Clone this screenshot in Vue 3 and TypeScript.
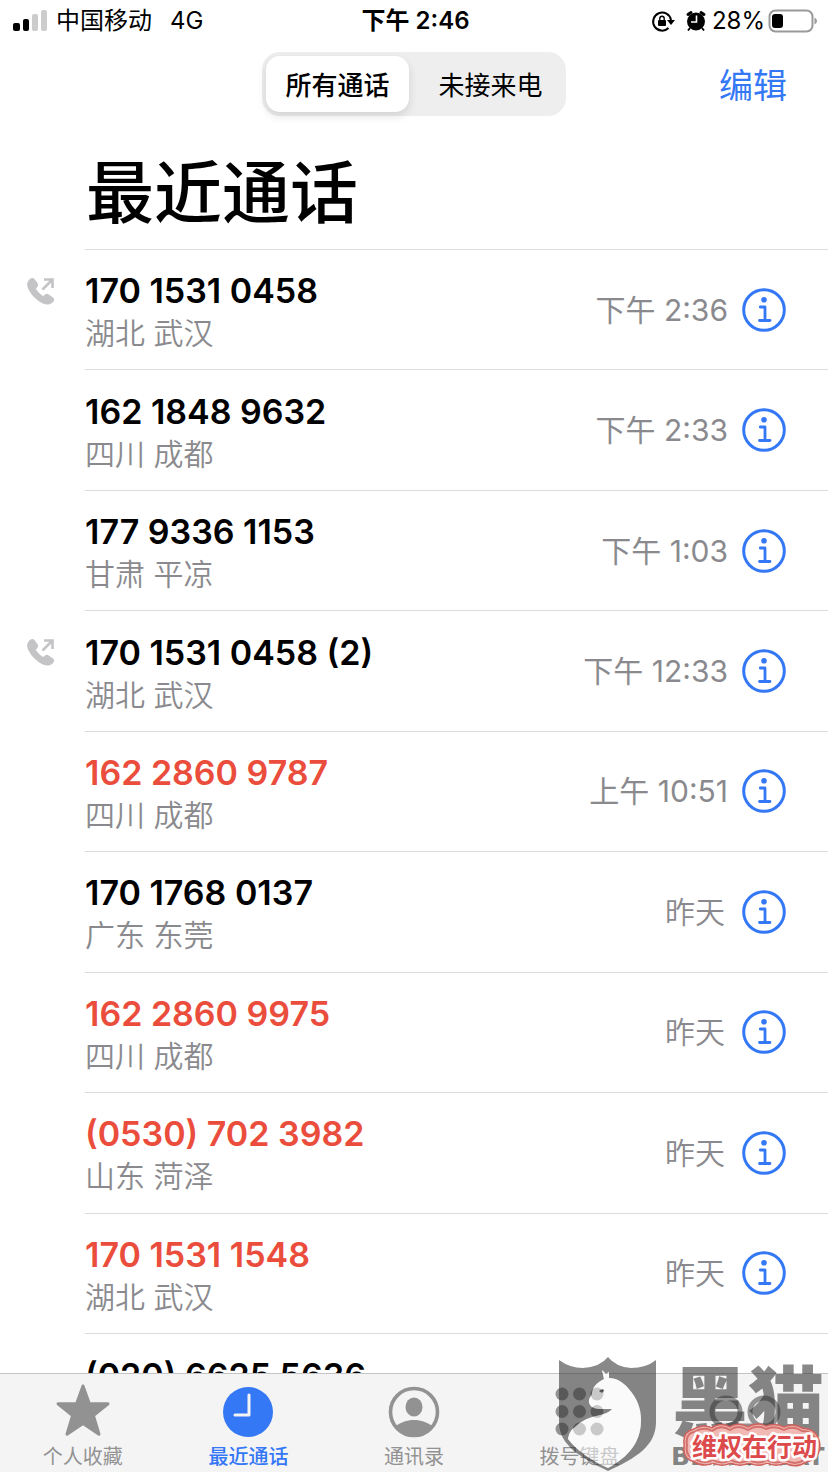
<script setup lang="ts">
import { ref } from 'vue'

interface Call {
  number: string
  place: string
  time: string
  missed?: boolean
  outgoing?: boolean
}

const calls: Call[] = [
  { number: '170 1531 0458', place: '湖北 武汉', time: '下午 2:36', outgoing: true },
  { number: '162 1848 9632', place: '四川 成都', time: '下午 2:33' },
  { number: '177 9336 1153', place: '甘肃 平凉', time: '下午 1:03' },
  { number: '170 1531 0458 (2)', place: '湖北 武汉', time: '下午 12:33', outgoing: true },
  { number: '162 2860 9787', place: '四川 成都', time: '上午 10:51', missed: true },
  { number: '170 1768 0137', place: '广东 东莞', time: '昨天' },
  { number: '162 2860 9975', place: '四川 成都', time: '昨天', missed: true },
  { number: '(0530) 702 3982', place: '山东 菏泽', time: '昨天', missed: true },
  { number: '170 1531 1548', place: '湖北 武汉', time: '昨天', missed: true },
]
const nextNumber = '(020) 6625 5636'

const filters = ['所有通话', '未接来电']
const activeFilter = ref(0)

const tabs = [
  { id: 'star', label: '个人收藏' },
  { id: 'clock', label: '最近通话' },
  { id: 'person', label: '通讯录' },
  { id: 'keypad', label: '拨号键盘' },
  { id: 'voicemail', label: '语音留言' },
]
const activeTab = ref('clock')
const keypadDots = [0, 1, 2, 3, 4, 5, 6, 7, 8]

const cat =
  'M44 16l4 4 3-2v6C58 24 65 28 70 34 79 44 83 54 83 66 83 89 70 103 50 114 33 106 18 96 10 85 11 79 13 76 17 73 23 67 30 64 38 62 47 60 52 58 54 55H41C35 55 30 51 31 46 32 42 34 42 34 39 35 32 40 28 46 25z'
const shield =
  'M1 6Q12 14 25 14 42 13 50 3 58 13 73 14 88 14 98 6V68C98 92 78 104 50 117 24 104 1 92 1 68z'
const cloud =
  'M136 78q10-6 18-1 9-7 18-1 8-6 18 0 9-6 18-1 9-4 18 1 9-5 18 1 13 0 15 13 1 13-13 16-9 6-19 0-9 5-18 0-9 5-18 0-9 5-18 0-9 5-18 0-9 5-18-1-10-2-8-14-2-11 7-13z'
</script>

<template>
  <div class="screen">
    <div class="status">
      <div class="status-side">
        <svg class="signal" viewBox="0 0 36 24" aria-hidden="true">
          <rect x="0" y="14" width="7" height="8" rx="2" />
          <rect x="10" y="10" width="6" height="12" rx="2" />
          <rect x="19" y="5" width="6" height="17" rx="2" fill="#ccc" />
          <rect x="28" y="1" width="6" height="21" rx="2" fill="#ccc" />
        </svg>
        <span class="carrier">中国移动</span>
        <span>4G</span>
      </div>
      <div class="clock">下午 2:46</div>
      <div class="status-side end">
        <svg class="lock" viewBox="0 0 24 24" aria-hidden="true">
          <path d="M17.500 19A9 9 0 1 1 20 11" fill="none" stroke="#000" stroke-width="2" />
          <path d="M16 11h8l-4 5z" />
          <rect x="7" y="11" width="8" height="6" rx="1" />
          <path d="M8.800 11V9.500a2.200 2.200 0 0 1 4.400 0V11" fill="none" stroke="#000" stroke-width="1.400" />
        </svg>
        <svg class="alarm" viewBox="0 0 22 24" aria-hidden="true">
          <circle cx="11" cy="12.500" r="9" />
          <path d="M3 5.500L6 3.500M16 3.500L19 5.500" stroke="#000" stroke-width="3" stroke-linecap="round" />
          <path d="M5 19l-2 2.500M17 19l2 2.500" stroke="#000" stroke-width="2" />
          <path d="M11.500 6.500v6.500H6" fill="none" stroke="#fff" stroke-width="1.600" />
        </svg>
        <span class="percent">28%</span>
        <svg class="battery" viewBox="0 0 50 24" aria-hidden="true">
          <rect x="1.500" y="1.500" width="43" height="21" rx="6" fill="#fff" stroke="#999" stroke-width="2" />
          <rect x="4" y="5" width="11" height="14" rx="3" />
          <path d="M46.500 8.500q2.500 1 2.500 3.500t-2.500 3.500z" fill="#999" />
        </svg>
      </div>
    </div>

    <header class="nav">
      <div class="segments">
        <button
          v-for="(name, i) in filters"
          :key="name"
          type="button"
          class="segment"
          :class="{ on: activeFilter === i }"
          :aria-pressed="activeFilter === i"
          @click="activeFilter = i"
        >{{ name }}</button>
      </div>
      <button type="button" class="edit">编辑</button>
    </header>

    <h1>最近通话</h1>

    <ul class="calls">
      <li v-for="(call, i) in calls" :key="i" class="row">
        <span class="direction">
          <svg v-if="call.outgoing" viewBox="0 0 28 28" role="img" aria-label="呼出">
            <path d="M1.300 5.200C2.800 2.300 5 .8 6.800 2.300L10 6.600c1 1.600.3 2.700-1.200 4-.8.800-.6 1.600.1 2.600 1.600 2.400 3.500 4.300 5.900 5.900 1 .7 1.800.7 2.600-.1 1.200-1.400 2.300-2 3.900-1l4.300 3.100c1.500 1.200.8 2.900-1.400 4.500-2.300 1.800-5.400 1.400-8.600-.1C9.800 22.700 5 18 2 12 .7 9.300.5 7 1.300 5.200z" fill="#c4c4c6" stroke="#c4c4c6" stroke-width="1.400" />
            <path d="M15.500 12.500L24.500 3.500M17 2.500h8.500v8.500" fill="none" stroke="#c4c4c6" stroke-width="2.600" />
          </svg>
        </span>
        <div class="body">
          <div class="who">
            <div class="number" :class="{ missed: call.missed }">{{ call.number }}</div>
            <div class="place">{{ call.place }}</div>
          </div>
          <time :class="{ day: call.time === '昨天' }">{{ call.time }}</time>
          <button type="button" class="info" :aria-label="'详情 ' + call.number">
            <svg viewBox="0 0 44 44" aria-hidden="true">
              <circle cx="22" cy="22" r="20.300" fill="none" stroke="#3478f6" stroke-width="3" />
              <circle cx="22" cy="11.800" r="2.800" fill="#3478f6" />
              <path d="M18.300 19h4.700v13.200M17.500 32.500h10.500" fill="none" stroke="#3478f6" stroke-width="2.800" stroke-linecap="round" stroke-linejoin="round" />
            </svg>
          </button>
        </div>
      </li>
      <li class="row peek">
        <span class="direction"></span>
        <div class="body"><div class="number">{{ nextNumber }}</div></div>
      </li>
    </ul>

    <nav class="tabs">
      <button
        v-for="tab in tabs"
        :key="tab.id"
        type="button"
        class="tab"
        :class="{ on: activeTab === tab.id }"
        @click="activeTab = tab.id"
      >
        <svg v-if="tab.id === 'star'" viewBox="0 0 72 56" aria-hidden="true">
          <path d="M36 4l6.300 17.500 18.700.3-14.600 11.700 5.600 18.700L36 41.500 20 52.200l5.600-18.700L11 21.800l18.700-.3z" fill="currentColor" stroke="currentColor" stroke-width="3" stroke-linejoin="round" />
        </svg>
        <svg v-else-if="tab.id === 'clock'" viewBox="0 0 72 56" aria-hidden="true">
          <circle cx="36" cy="30" r="25" fill="currentColor" />
          <path d="M37 13v20H23" fill="none" stroke="#f4f4f5" stroke-width="3" stroke-linecap="round" stroke-linejoin="round" />
        </svg>
        <svg v-else-if="tab.id === 'person'" viewBox="0 0 72 56" aria-hidden="true">
          <circle cx="36" cy="30" r="23.500" fill="none" stroke="currentColor" stroke-width="3.600" />
          <ellipse cx="36" cy="25" rx="8.500" ry="9.500" fill="currentColor" />
          <path d="M17.500 44.500C22 40.500 29 38 36 38S50 40.500 54.500 44.500A24 24 0 0 1 17.500 44.500z" fill="currentColor" />
        </svg>
        <svg v-else-if="tab.id === 'keypad'" viewBox="0 0 72 56" aria-hidden="true">
          <circle v-for="n in keypadDots" :key="n" :cx="18 + (n % 3) * 17.500" :cy="12 + Math.floor(n / 3) * 17.500" r="6.500" fill="currentColor" />
        </svg>
        <svg v-else viewBox="0 0 72 56" aria-hidden="true">
          <g fill="none" stroke="currentColor" stroke-width="5">
            <circle cx="17" cy="30" r="14" />
            <circle cx="55" cy="30" r="14" />
            <path d="M17 44h38" />
          </g>
        </svg>
        <span>{{ tab.label }}</span>
      </button>
    </nav>

    <div class="watermark">
      <svg viewBox="0 0 270 118" role="img" aria-label="黑猫 BLACK CAT 维权在行动">
        <path class="ink" fill-rule="evenodd" :d="shield + cat" />
        <path fill="#fff" fill-opacity=".5" :d="cat" />
        <path fill="#555" d="M41 37q3-3 5-1-1 5-5 1z" />
        <text class="ink brand" x="114" y="76">黑猫</text>
        <text class="ink latin" x="113" y="111">BLACK CAT</text>
        <path class="cloud outer" :d="cloud" />
        <path class="cloud middle" :d="cloud" />
        <path class="cloud inner" :d="cloud" />
        <text class="slogan" x="134" y="102">维权在行动</text>
      </svg>
    </div>
  </div>
</template>

<style>
body {
  background: #fff;
}
</style>

<style scoped>
.screen {
  position: relative;
  display: flex;
  flex-direction: column;
  height: 100vh;
  overflow: hidden;
  color: #000;
  font-family: Inter, "Noto Sans CJK SC", sans-serif;
}
button {
  margin: 0;
  padding: 0;
  border: 0;
  background: none;
  color: inherit;
  font: inherit;
}
svg {
  display: block;
  flex: none;
}
.status {
  display: grid;
  grid-template-columns: 1fr auto 1fr;
  align-items: center;
  height: 42px;
  padding: 0 10px 0 13px;
  font-size: 24px;
  line-height: 32px;
}
.status-side {
  display: flex;
  align-items: center;
}
.end {
  justify-content: flex-end;
}
.signal {
  width: 36px;
  height: 24px;
  margin-right: 7px;
}
.carrier {
  margin-right: 18px;
}
.clock {
  font-weight: 600;
}
.lock {
  width: 24px;
  height: 24px;
  margin-right: 10px;
}
.alarm {
  width: 22px;
  height: 24px;
  margin-right: 5px;
}
.percent {
  margin-right: 3px;
}
.battery {
  width: 50px;
  height: 24px;
}
.nav {
  display: grid;
  grid-template-columns: 1fr auto 1fr;
  grid-template-areas: ". filter edit";
  align-items: center;
  padding: 10px 41px 0;
}
.segments {
  grid-area: filter;
  display: grid;
  grid-template-columns: 1fr 1fr;
  gap: 10px;
  width: 296px;
  padding: 4px;
  border-radius: 18px;
  background: #eeeeef;
}
.segment {
  height: 56px;
  padding-bottom: 2px;
  border-radius: 14px;
  font-size: 26px;
}
.segment.on {
  background: #fff;
  box-shadow: 0 4px 10px rgba(0, 0, 0, 0.12);
  font-weight: 500;
}
.edit {
  grid-area: edit;
  justify-self: end;
  padding-top: 4px;
  color: #3478f6;
  font-size: 34px;
  line-height: 48px;
}
h1 {
  margin: 29px 0 0 85px;
  padding: 0 0 8px 1px;
  font-size: 68px;
  line-height: 96px;
  font-weight: 500;
  border-bottom: 1px solid #dcdcde;
}
.calls {
  flex: 1;
  display: flex;
  flex-direction: column;
  min-height: 0;
  margin: 0;
  padding: 0;
  list-style: none;
  overflow: hidden;
}
.row {
  flex: 1;
  display: grid;
  grid-template-columns: 85px 1fr;
  min-height: 0;
}
.direction {
  padding: 27px 0 0 27px;
}
.direction svg {
  width: 28px;
  height: 28px;
}
.body {
  display: flex;
  align-items: center;
  padding-right: 42px;
  border-bottom: 1px solid #dcdcde;
}
.who {
  flex: 1;
  padding-top: 3px;
}
.number {
  font-size: 34px;
  line-height: 44px;
  font-weight: 600;
}
.missed {
  color: #eb4d3d;
}
.place,
time {
  color: #8a8a8e;
  font-size: 30px;
  line-height: 40px;
  font-weight: 350;
}
time {
  margin-right: 14px;
  font-weight: 400;
}
.day {
  margin-right: 17px;
  font-weight: 350;
}
.info svg {
  width: 44px;
  height: 44px;
}
.peek {
  flex: 0 0 39px;
  overflow: hidden;
}
.peek .body {
  align-items: flex-start;
  padding-top: 20px;
  border: 0;
}
.tabs {
  display: grid;
  grid-template-columns: repeat(5, 1fr);
  border-top: 1px solid #c4c4c4;
  background: #f4f4f5;
}
.tab {
  display: flex;
  flex-direction: column;
  align-items: center;
  gap: 4px;
  padding-top: 8px;
  color: #929292;
  font-size: 20px;
  line-height: 30px;
}
.tab svg {
  width: 72px;
  height: 56px;
}
.tab.on {
  color: #3478f6;
  font-weight: 500;
}
.watermark {
  position: absolute;
  right: 0;
  bottom: 0;
  width: 270px;
  pointer-events: none;
}
.ink {
  fill: #2e2c2d;
  fill-opacity: 0.56;
}
.brand {
  font-size: 76px;
  font-weight: 900;
}
.latin {
  font-family: "DejaVu Sans", sans-serif;
  font-size: 25px;
  font-weight: 700;
}
.cloud {
  stroke-linejoin: round;
}
.outer {
  fill: none;
  stroke: #cf625d;
  stroke-width: 7;
}
.middle {
  fill: none;
  stroke: #efb5b0;
  stroke-width: 4;
}
.inner {
  fill: #f1b9b4;
  stroke: #d5716c;
  stroke-width: 2;
}
.slogan {
  fill: #dc4a4c;
  stroke: #fff;
  stroke-width: 5;
  stroke-linejoin: round;
  paint-order: stroke;
  font-size: 25px;
  font-weight: 700;
}
</style>
